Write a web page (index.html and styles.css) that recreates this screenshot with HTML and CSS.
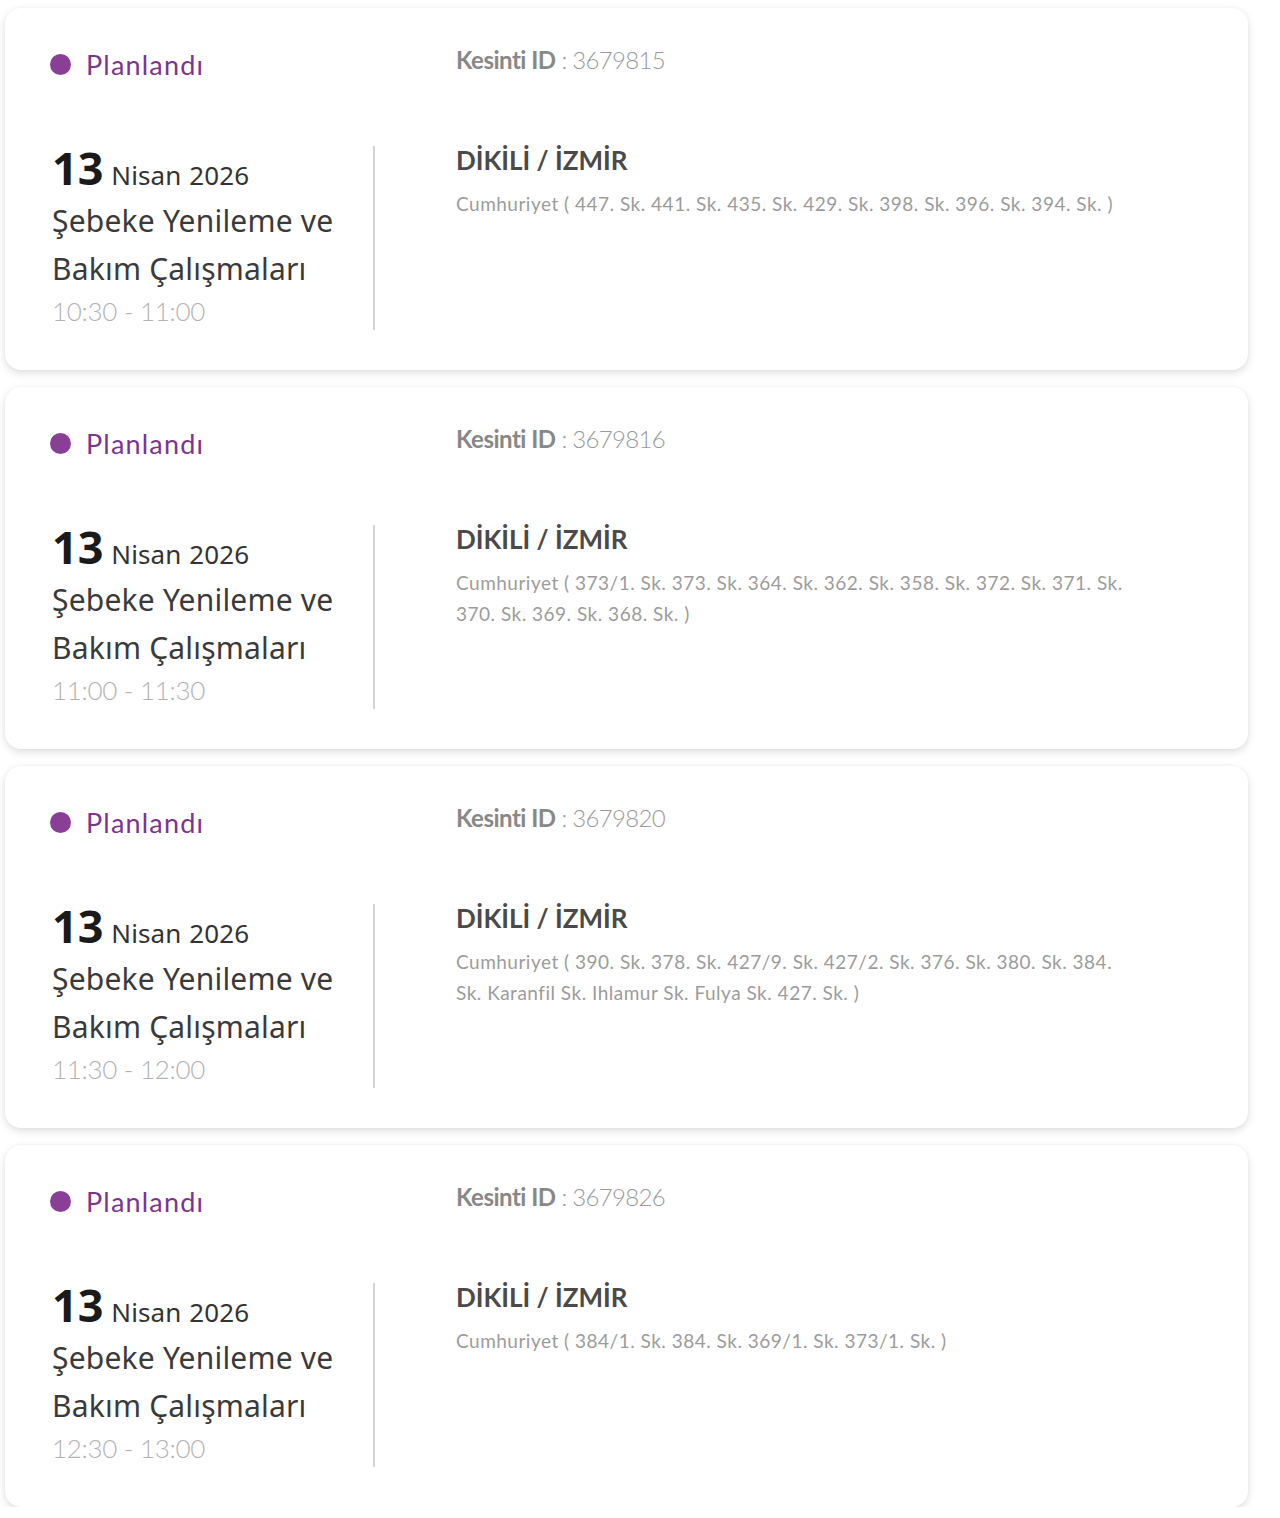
FILE: index.html
```html
<!DOCTYPE html>
<html lang="tr">
<head>
    <meta charset="UTF-8">
    <meta name="viewport" content="width=device-width, initial-scale=1.0">
    <title>Planlı Kesintiler</title>
    <link rel="stylesheet" href="styles.css">
</head>
<body>
    <div class="list">

        <div class="card">
            <div class="status"><span class="dot"></span>Planlandı</div>
            <div class="kesinti"><b>Kesinti ID</b> : 3679815</div>
            <div class="when">
                <div class="date"><span class="day">13</span> Nisan 2026</div>
                <div class="title">Şebeke Yenileme ve Bakım Çalışmaları</div>
                <div class="time">10:30 - 11:00</div>
            </div>
            <div class="where">
                <div class="city">DİKİLİ / İZMİR</div>
                <div class="address">Cumhuriyet ( 447. Sk. 441. Sk. 435. Sk. 429. Sk. 398. Sk. 396. Sk. 394. Sk. )</div>
            </div>
        </div>

        <div class="card">
            <div class="status"><span class="dot"></span>Planlandı</div>
            <div class="kesinti"><b>Kesinti ID</b> : 3679816</div>
            <div class="when">
                <div class="date"><span class="day">13</span> Nisan 2026</div>
                <div class="title">Şebeke Yenileme ve Bakım Çalışmaları</div>
                <div class="time">11:00 - 11:30</div>
            </div>
            <div class="where">
                <div class="city">DİKİLİ / İZMİR</div>
                <div class="address">Cumhuriyet ( 373/1. Sk. 373. Sk. 364. Sk. 362. Sk. 358. Sk. 372. Sk. 371. Sk. 370. Sk. 369. Sk. 368. Sk. )</div>
            </div>
        </div>

        <div class="card">
            <div class="status"><span class="dot"></span>Planlandı</div>
            <div class="kesinti"><b>Kesinti ID</b> : 3679820</div>
            <div class="when">
                <div class="date"><span class="day">13</span> Nisan 2026</div>
                <div class="title">Şebeke Yenileme ve Bakım Çalışmaları</div>
                <div class="time">11:30 - 12:00</div>
            </div>
            <div class="where">
                <div class="city">DİKİLİ / İZMİR</div>
                <div class="address">Cumhuriyet ( 390. Sk. 378. Sk. 427/9. Sk. 427/2. Sk. 376. Sk. 380. Sk. 384. Sk. Karanfil Sk. Ihlamur Sk. Fulya Sk. 427. Sk. )</div>
            </div>
        </div>

        <div class="card">
            <div class="status"><span class="dot"></span>Planlandı</div>
            <div class="kesinti"><b>Kesinti ID</b> : 3679826</div>
            <div class="when">
                <div class="date"><span class="day">13</span> Nisan 2026</div>
                <div class="title">Şebeke Yenileme ve Bakım Çalışmaları</div>
                <div class="time">12:30 - 13:00</div>
            </div>
            <div class="where">
                <div class="city">DİKİLİ / İZMİR</div>
                <div class="address">Cumhuriyet ( 384/1. Sk. 384. Sk. 369/1. Sk. 373/1. Sk. )</div>
            </div>
        </div>

    </div>
</body>
</html>
```

FILE: styles.css
```css
* {
    margin: 0;
    padding: 0;
    box-sizing: border-box;
}

body {
    font-family: 'Lato', 'Liberation Sans', sans-serif;
    background: #fff;
    padding: 8px 32px 0 5px;
}

.list {
    display: flex;
    flex-direction: column;
    gap: 17px;
}

/* Kart */
.card {
    background: white;
    border-radius: 16px;
    box-shadow: 0 3px 8px rgba(0,0,0,0.13), 0 0 3px rgba(0,0,0,0.04);
    padding: 34px 46px 40px 45px;
    height: 362px;
    display: grid;
    grid-template-columns: 406px 1fr;
    grid-template-rows: 44px 1fr;
    row-gap: 60px;
}

.status {
    display: flex;
    align-items: center;
    gap: 15px;
    font-size: 27px;
    letter-spacing: 1.2px;
    color: #7b3590;
}

.dot {
    width: 21px;
    height: 21px;
    border-radius: 50%;
    background: #8a3f96;
}

.kesinti {
    font-size: 24px;
    color: #9a9a9a;
    font-weight: 300;
    letter-spacing: -0.7px;
    line-height: 36px;
}

.kesinti b {
    color: #888;
    font-weight: 700;
    letter-spacing: -0.5px;
}

.when {
    width: 325px;
    height: 184px;
    border-right: 2px solid #d4d4d4;
    font-family: 'Noto Sans', sans-serif;
    padding-left: 2px;
}

.date {
    font-size: 26px;
    line-height: 44px;
    color: #333;
    word-spacing: 1px;
    letter-spacing: 0.1px;
}

.day {
    font-size: 45px;
    font-weight: 700;
    color: #1a1a1a;
    letter-spacing: 0;
}

.title {
    font-size: 30px;
    line-height: 48px;
    color: #3a3a3a;
    letter-spacing: 0.2px;
    width: 300px;
}

.time {
    font-family: 'Lato', sans-serif;
    font-size: 26px;
    line-height: 36px;
    color: #b3b3b3;
    font-weight: 300;
    letter-spacing: -0.3px;
}

.city {
    font-size: 26px;
    font-weight: 700;
    line-height: 28px;
    color: #4a4a4a;
}

.address {
    margin-top: 14px;
    max-width: 676px;
    font-size: 19px;
    line-height: 31px;
    color: #9c9c9c;
    letter-spacing: 0.5px;
}
```
